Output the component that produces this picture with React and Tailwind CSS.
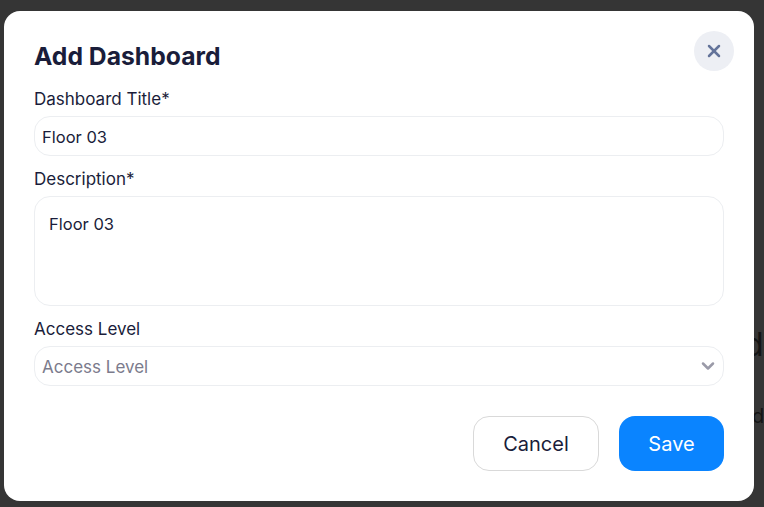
import React from "react";
import { X, ChevronDown } from "lucide-react";

function Field({ label, children }) {
  return (
    <div className="flex flex-col gap-[7px]">
      <label className="text-[17px] leading-[20px] font-normal text-[#1a1d3a]">{label}</label>
      {children}
    </div>
  );
}

function App() {
  return (
    <div
      className="relative w-[764px] h-[507px] overflow-hidden bg-[#353535] pt-[11px] pl-[4px]"
      style={{ fontFamily: "Inter, 'Noto Sans', sans-serif" }}
    >
      {/* page text showing behind the overlay */}
      <span className="absolute left-[744px] top-[325px] text-[32px] leading-[40px] text-[#141414]">d</span>
      <span className="absolute left-[752px] top-[406px] text-[20px] leading-[20px] text-[#141414]">d</span>

      <div className="relative w-[750px] h-[490px] rounded-[16px] bg-white px-[30px] pt-[30px]">
        <button className="absolute right-[20px] top-[20px] w-[40px] h-[40px] rounded-full bg-[#edeff4] flex items-center justify-center text-[#64749a]">
          <X size={20} strokeWidth={3} />
        </button>

        <h1 className="text-[24.7px] leading-[30px] font-bold text-[#1a1d3a]">Add Dashboard</h1>

        <div className="flex flex-col gap-[13px] mt-[18px]">
          <Field label="Dashboard Title*">
            <input
              readOnly
              value="Floor 03"
              className="w-full h-[40px] rounded-[16px] border border-[#eceef1] px-[7px] pt-[2px] text-[16.5px] font-normal text-[#1a1d3a] outline-none"
            />
          </Field>
          <Field label="Description*">
            <textarea
              readOnly
              value="Floor 03"
              className="w-full h-[110px] block rounded-[16px] border border-[#eceef1] px-[14px] py-[15px] text-[16.5px] leading-[24px] font-normal text-[#1a1d3a] outline-none resize-none"
            />
          </Field>
          <Field label="Access Level">
            <div className="w-full h-[40px] rounded-[16px] border border-[#eceef1] pl-[7px] pr-[5px] flex items-center justify-between text-[17px] font-normal text-[#7b7b8c]">
              <span className="pt-[4px]">Access Level</span>
              <ChevronDown size={20} strokeWidth={3} className="text-[#9a9aa8]" />
            </div>
          </Field>
        </div>

        <div className="flex justify-end gap-[20px] mt-[30px]">
          <button className="w-[126px] h-[55px] rounded-[16px] border border-[#d9d9d9] bg-white text-[20px] font-normal text-[#1a1d3a]">
            Cancel
          </button>
          <button className="w-[105px] h-[55px] rounded-[16px] bg-[#0a84ff] text-[20px] font-normal text-white">
            Save
          </button>
        </div>
      </div>
    </div>
  );
}

export default App;
